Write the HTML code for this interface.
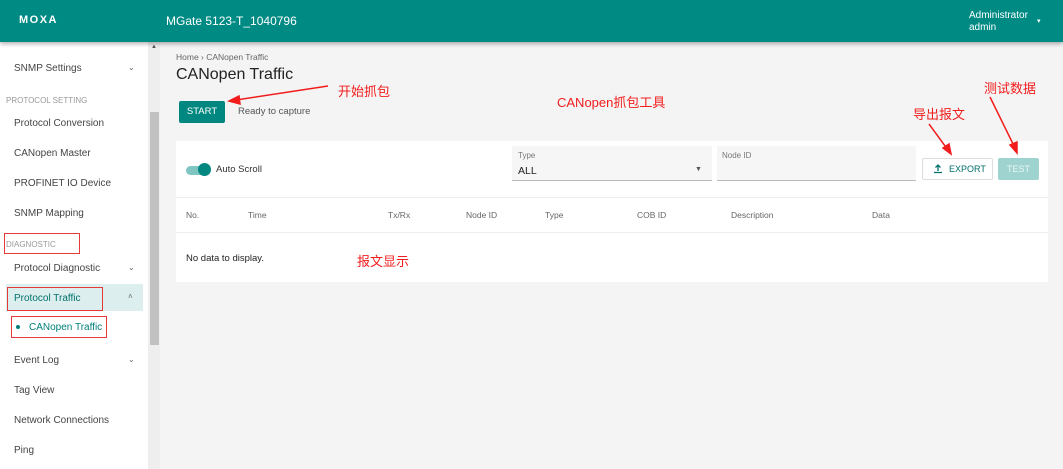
<!DOCTYPE html>
<html><head><meta charset="utf-8"><style>
*{margin:0;padding:0;box-sizing:border-box}
body{width:1063px;height:469px;overflow:hidden;background:#f4f4f4;font-family:"Liberation Sans","Noto Sans CJK SC",sans-serif;position:relative;color:#333}
.hdr{position:absolute;left:0;top:0;width:1063px;height:42px;background:#008a84;box-shadow:0 2px 4px rgba(0,0,0,.3);z-index:3;color:#fff}
.abs{position:absolute}
.side{position:absolute;left:0;top:42px;width:148px;height:427px;background:#fff}
.sb{position:absolute;left:148px;top:42px;width:12px;height:427px;background:#eee}
.thumb{position:absolute;left:150px;top:112px;width:9px;height:233px;background:#c1c1c1}
.it{position:absolute;left:14px;font-size:10px;color:#444}
.cv{position:absolute;left:128px;font-size:8px;color:#666}
.red{color:#f21c1c;font-size:13px;position:absolute;z-index:5}
.rb{position:absolute;border:1.5px solid #e53a3a}
.th{position:absolute;top:210px;font-size:8.5px;color:#666}
</style></head><body>
<div class="hdr">
<div class="abs" style="left:19px;top:14px;font-size:11px;font-weight:bold;letter-spacing:1.5px">MOXA</div>
<div class="abs" style="left:166px;top:14px;font-size:12px">MGate 5123-T_1040796</div>
<div class="abs" style="left:969px;top:10px;font-size:10px;line-height:12px">Administrator<br>admin</div>
<div class="abs" style="left:1037px;top:17px;font-size:7px">▾</div>
</div>
<div class="side">
<div class="it" style="top:21px">SNMP Settings</div><div class="cv" style="top:21px">⌄</div>
<div class="abs" style="left:6px;top:54px;font-size:8px;color:#999">PROTOCOL SETTING</div>
<div class="it" style="top:76px">Protocol Conversion</div>
<div class="it" style="top:106px">CANopen Master</div>
<div class="it" style="top:136px">PROFINET IO Device</div>
<div class="it" style="top:166px">SNMP Mapping</div>
<div class="abs" style="left:6px;top:198px;font-size:8px;color:#999">DIAGNOSTIC</div>
<div class="it" style="top:221px">Protocol Diagnostic</div><div class="cv" style="top:221px">⌄</div>
<div class="abs" style="left:6px;top:242px;width:137px;height:27px;background:#ddeeee"></div>
<div class="it" style="top:251px;color:#00726d">Protocol Traffic</div><div class="cv" style="top:250px">˄</div>
<div class="abs" style="left:16px;top:283px;width:4px;height:4px;border-radius:50%;background:#00807a"></div>
<div class="it" style="left:29px;top:280px;color:#00807a">CANopen Traffic</div>
<div class="it" style="top:313px">Event Log</div><div class="cv" style="top:313px">⌄</div>
<div class="it" style="top:343px">Tag View</div>
<div class="it" style="top:373px">Network Connections</div>
<div class="it" style="top:403px">Ping</div>
</div>
<div class="sb"></div><div class="thumb"></div>
<div class="abs" style="left:151px;top:44px;font-size:6px;color:#555">▲</div>
<div class="rb" style="left:4px;top:233px;width:76px;height:21px"></div>
<div class="rb" style="left:7px;top:287px;width:96px;height:24px"></div>
<div class="rb" style="left:11px;top:316px;width:96px;height:22px"></div>

<div class="abs" style="left:176px;top:52px;font-size:8.5px;color:#666">Home › CANopen Traffic</div>
<div class="abs" style="left:176px;top:66px;font-size:16px;color:#222">CANopen Traffic</div>
<div class="abs" style="left:179px;top:101px;width:46px;height:22px;background:#00877f;border-radius:2px;color:#fff;font-size:9.5px;text-align:center;line-height:22px">START</div>
<div class="abs" style="left:238px;top:106px;font-size:9.5px;color:#555">Ready to capture</div>
<div class="red" style="left:338px;top:81px">开始抓包</div>
<div class="red" style="left:557px;top:92px">CANopen抓包工具</div>
<div class="red" style="left:913px;top:104px">导出报文</div>
<div class="red" style="left:984px;top:78px">测试数据</div>

<div class="abs" style="left:176px;top:141px;width:872px;height:141px;background:#fff"></div>
<div class="abs" style="left:186px;top:166px;width:24px;height:9px;border-radius:5px;background:#7fc6c2"></div>
<div class="abs" style="left:198px;top:163px;width:13px;height:13px;border-radius:50%;background:#00877f"></div>
<div class="abs" style="left:216px;top:164px;font-size:9.5px;color:#333">Auto Scroll</div>
<div class="abs" style="left:512px;top:146px;width:200px;height:35px;background:#f6f6f6;border-bottom:1px solid #bbb"></div>
<div class="abs" style="left:518px;top:151px;font-size:8px;color:#777">Type</div>
<div class="abs" style="left:518px;top:165px;font-size:10.5px;color:#222">ALL</div>
<div class="abs" style="left:695px;top:166px;font-size:7px;color:#555">▼</div>
<div class="abs" style="left:717px;top:146px;width:199px;height:35px;background:#f6f6f6;border-bottom:1px solid #bbb"></div>
<div class="abs" style="left:722px;top:151px;font-size:8px;color:#777">Node ID</div>
<div class="abs" style="left:922px;top:158px;width:71px;height:22px;border:1px solid #ddd;border-radius:2px;font-size:9px;color:#00706b;line-height:20px;padding-left:26px">EXPORT</div>
<svg class="abs" style="left:933px;top:164px" width="10" height="10"><g stroke="#00706b" stroke-width="1.3" fill="none"><path d="M5 7V1M2.5 3.5L5 1l2.5 2.5M1 8.5h8"/></g></svg>
<div class="abs" style="left:998px;top:158px;width:41px;height:22px;background:#9fd3d0;border-radius:2px;font-size:9px;color:#e8f6f5;line-height:22px;text-align:center">TEST</div>
<div class="abs" style="left:176px;top:197px;width:872px;height:1px;background:#eee"></div>
<div class="th" style="left:186px">No.</div><div class="th" style="left:248px">Time</div><div class="th" style="left:388px">Tx/Rx</div><div class="th" style="left:466px">Node ID</div><div class="th" style="left:545px">Type</div><div class="th" style="left:637px">COB ID</div><div class="th" style="left:731px">Description</div><div class="th" style="left:872px">Data</div>
<div class="abs" style="left:176px;top:232px;width:872px;height:1px;background:#eee"></div>
<div class="abs" style="left:186px;top:253px;font-size:9.5px;color:#222">No data to display.</div>
<div class="red" style="left:357px;top:251px">报文显示</div>
<svg class="abs" style="left:0;top:0;z-index:6" width="1063" height="469"><g stroke="#f21c1c" stroke-width="1.5" fill="#f21c1c">
<line x1="328" y1="86" x2="236" y2="100"/><polygon points="229,101 239,96 240,104"/>
<line x1="929" y1="124" x2="948" y2="150"/><polygon points="951,154 943,148 949,144"/>
<line x1="990" y1="97" x2="1015" y2="148"/><polygon points="1017,153 1010,145 1017,142"/></g></svg>
</body></html>
